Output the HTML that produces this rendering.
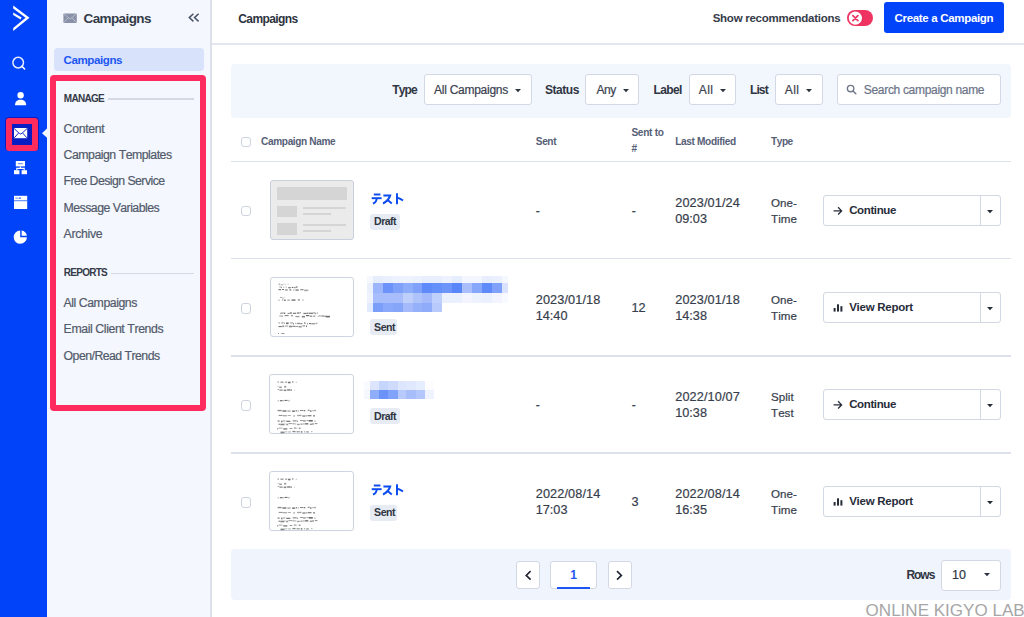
<!DOCTYPE html><html><head><meta charset="utf-8"><style>
html,body{margin:0;padding:0;width:1024px;height:617px;overflow:hidden;background:#fff;font-family:"Liberation Sans",sans-serif;}
.t{position:absolute;white-space:nowrap;font-kerning:none;}
.n{-webkit-text-stroke:0.2px currentColor;}
.r{position:absolute;box-sizing:border-box;}
svg{position:absolute;}
</style></head><body>
<div class="r" style="left:0px;top:0px;width:47px;height:617px;background:#0043F9;"></div>
<svg style="left:0px;top:0px" width="47" height="40" viewBox="0 0 47 40"><path d="M13.2 5.4 L29.5 17.8 L13.2 30.9 L13.2 27.9 L25.6 17.8 L13.2 8.6 Z" fill="#fff"/><path d="M13.2 12.6 L21.6 17.5 L20.5 19.5 L13.2 15.1 Z" fill="#fff"/></svg>
<svg style="left:0px;top:48px" width="47" height="30" viewBox="0 48 47 30"><circle cx="18.2" cy="62.6" r="5.3" fill="none" stroke="#fff" stroke-width="1.5" opacity="0.9"/><path d="M21.9 66.3 L24.6 69" stroke="#fff" stroke-width="1.6" stroke-linecap="round"/></svg>
<svg style="left:0px;top:88px" width="47" height="22" viewBox="0 88 47 22"><circle cx="20.6" cy="95.2" r="3.2" fill="#fff"/><path d="M15 105.2 C15 101.6 17.5 99.8 20.6 99.8 C23.7 99.8 26.2 101.6 26.2 105.2 Z" fill="#fff"/></svg>
<div class="r" style="left:4.6px;top:117.2px;width:34px;height:34px;background:#0A1DC2;border-radius:4px;"></div>
<div class="r" style="left:5.5px;top:118px;width:32.5px;height:32.5px;background:transparent;border:6px solid #FF2A5E;border-radius:3px;"></div>
<svg style="left:0px;top:112px" width="47" height="40" viewBox="0 112 47 40"><rect x="14" y="128" width="13.2" height="10.2" fill="#fff"/><path d="M14.2 128.6 L19.2 133.3 Q20.6 134.6 22 133.3 L27 128.6 M14.3 137.8 L18.4 133.2 M26.9 137.8 L22.8 133.2" fill="none" stroke="#0A1DC2" stroke-width="0.95"/></svg>
<svg style="left:40px;top:126px" width="8" height="14" viewBox="40 126 8 14"><path d="M42 133.2 L47 128.6 L47 137.8 Z" fill="#F4F7FD"/></svg>
<svg style="left:0px;top:156px" width="47" height="22" viewBox="0 156 47 22"><rect x="15.8" y="161" width="9.2" height="5.4" fill="#fff"/><rect x="18" y="163" width="4.8" height="1.2" fill="#0043F9" opacity="0.55"/><path d="M20.4 166.4 V168.3 M16.8 170.2 V168.3 H24.2 V170.2" fill="none" stroke="#fff" stroke-width="1.15"/><rect x="14" y="170.2" width="5.4" height="4" fill="#fff"/><rect x="21.6" y="170.2" width="5.4" height="4" fill="#fff"/></svg>
<svg style="left:0px;top:192px" width="47" height="20" viewBox="0 192 47 20"><rect x="14" y="195.8" width="13.2" height="13.2" fill="#fff"/><rect x="14" y="200.2" width="13.2" height="1" fill="#0043F9" opacity="0.7"/><rect x="15.6" y="197.6" width="1" height="1" fill="#0043F9"/><rect x="17.4" y="197.6" width="1" height="1" fill="#0043F9"/><rect x="19" y="197.6" width="2" height="1" fill="#0043F9"/></svg>
<svg style="left:0px;top:228px" width="47" height="18" viewBox="0 228 47 18"><path d="M20.2 230.6 A6.6 6.6 0 1 0 26.9 237.2 L20.2 237.2 Z" fill="#fff"/><path d="M21.6 230.6 A6.6 6.6 0 0 1 26.9 235.8 L21.6 235.8 Z" fill="#fff"/></svg>
<div class="r" style="left:47px;top:0px;width:164px;height:617px;background:#F4F7FD;"></div>
<div class="r" style="left:210px;top:0px;width:2px;height:617px;background:#DCE0EA;"></div>
<svg style="left:60px;top:10px" width="20" height="16" viewBox="60 10 20 16"><rect x="63.4" y="13.4" width="13.4" height="9.6" fill="#8991A8" rx="0.8"/><path d="M63.8 13.9 L70.1 19 L76.4 13.9 M63.8 22.6 L68.2 17.8 M76.4 22.6 L72 17.8" fill="none" stroke="#C9CDD6" stroke-width="0.7"/></svg>
<div class="t" style="left:83.5px;top:11.55px;font-size:13.5px;line-height:13.5px;font-weight:700;color:#333A48;letter-spacing:-0.603px;">Campaigns</div>
<svg style="left:184px;top:9px" width="20" height="16" viewBox="184 9 20 16"><path d="M193.4 13.8 L189.3 17.6 L193.4 21.4 M198.6 13.8 L194.5 17.6 L198.6 21.4" fill="none" stroke="#4A5468" stroke-width="1.5"/></svg>
<div class="r" style="left:53.6px;top:47.8px;width:150.6px;height:22.8px;background:#D8E3FB;border-radius:4px;"></div>
<div class="t" style="left:63.5px;top:53.80px;font-size:11.6px;line-height:11.6px;font-weight:700;color:#1D56F2;letter-spacing:-0.439px;">Campaigns</div>
<div class="r" style="left:50px;top:75px;width:156px;height:336px;background:transparent;border:6px solid #FF2A5E;border-radius:4px;"></div>
<div class="t" style="left:63.8px;top:93.90px;font-size:10px;line-height:10px;font-weight:700;color:#353B48;letter-spacing:-0.709px;">MANAGE</div>
<div class="r" style="left:108px;top:98.4px;width:86px;height:1.2px;background:#D3D8E3;"></div>
<div class="t n" style="left:63.6px;top:122.85px;font-size:12.3px;line-height:12.3px;font-weight:400;color:#525A6B;letter-spacing:-0.337px;">Content</div>
<div class="t n" style="left:63.6px;top:149.05px;font-size:12.3px;line-height:12.3px;font-weight:400;color:#525A6B;letter-spacing:-0.491px;">Campaign Templates</div>
<div class="t n" style="left:63.6px;top:175.35px;font-size:12.3px;line-height:12.3px;font-weight:400;color:#525A6B;letter-spacing:-0.548px;">Free Design Service</div>
<div class="t n" style="left:63.6px;top:201.55px;font-size:12.3px;line-height:12.3px;font-weight:400;color:#525A6B;letter-spacing:-0.534px;">Message Variables</div>
<div class="t n" style="left:63.6px;top:227.85px;font-size:12.3px;line-height:12.3px;font-weight:400;color:#525A6B;letter-spacing:-0.326px;">Archive</div>
<div class="t" style="left:63.8px;top:267.90px;font-size:10px;line-height:10px;font-weight:700;color:#353B48;letter-spacing:-0.74px;">REPORTS</div>
<div class="r" style="left:111px;top:273px;width:83px;height:1.2px;background:#D3D8E3;"></div>
<div class="t n" style="left:63.6px;top:297.05px;font-size:12.3px;line-height:12.3px;font-weight:400;color:#525A6B;letter-spacing:-0.462px;">All Campaigns</div>
<div class="t n" style="left:63.6px;top:323.25px;font-size:12.3px;line-height:12.3px;font-weight:400;color:#525A6B;letter-spacing:-0.403px;">Email Client Trends</div>
<div class="t n" style="left:63.6px;top:349.55px;font-size:12.3px;line-height:12.3px;font-weight:400;color:#525A6B;letter-spacing:-0.537px;">Open/Read Trends</div>
<div class="r" style="left:212px;top:43px;width:812px;height:1.6px;background:#E3E6EE;"></div>
<div class="t" style="left:238.3px;top:12.80px;font-size:12px;line-height:12px;font-weight:700;color:#2D3340;letter-spacing:-0.605px;">Campaigns</div>
<div class="t" style="left:712.7px;top:12.85px;font-size:11.5px;line-height:11.5px;font-weight:700;color:#363C49;letter-spacing:-0.258px;">Show recommendations</div>
<div class="r" style="left:846.9px;top:9.8px;width:26.5px;height:16.4px;background:#EF3462;border-radius:8.2px;"></div>
<svg style="left:846px;top:9px" width="20" height="18" viewBox="846 9 20 18"><circle cx="856.6" cy="18.1" r="6.8" fill="#D82F5A" opacity="0.5"/><circle cx="855.4" cy="18.1" r="6.6" fill="#fff"/><path d="M852.9 15.6 L857.9 20.6 M857.9 15.6 L852.9 20.6" stroke="#EE3563" stroke-width="1.7" stroke-linecap="round"/></svg>
<div class="r" style="left:883.5px;top:2.4px;width:120.8px;height:31px;background:#0043F9;border-radius:3px;"></div>
<div class="t" style="left:894.5px;top:12.65px;font-size:11.5px;line-height:11.5px;font-weight:700;color:#fff;letter-spacing:-0.317px;">Create a Campaign</div>
<div class="r" style="left:231px;top:64px;width:780px;height:54px;background:#F2F6FD;border-radius:4px;"></div>
<div class="t" style="left:392.2px;top:83.80px;font-size:12px;line-height:12px;font-weight:700;color:#2F3542;letter-spacing:-0.856px;">Type</div>
<div class="r" style="left:424.4px;top:74.2px;width:107.2px;height:30.6px;background:;border:1px solid #D3D8E4;border-radius:3px;background:#fff;"></div>
<div class="t n" style="left:434px;top:84.40px;font-size:12px;line-height:12px;font-weight:400;color:#3A4150;letter-spacing:-0.261px;">All Campaigns</div>
<svg style="left:513.6px;top:87.6px" width="9" height="6" viewBox="513.6 87.6 9 6"><path d="M514.6 88.6 L520.6 88.6 L517.6 91.8 Z" fill="#2D3340"/></svg>
<div class="t" style="left:545px;top:83.80px;font-size:12px;line-height:12px;font-weight:700;color:#2F3542;letter-spacing:-0.467px;">Status</div>
<div class="r" style="left:585.4px;top:74.2px;width:54px;height:30.6px;background:;border:1px solid #D3D8E4;border-radius:3px;background:#fff;"></div>
<div class="t n" style="left:596.5px;top:84.40px;font-size:12px;line-height:12px;font-weight:400;color:#3A4150;letter-spacing:-0.419px;">Any</div>
<svg style="left:621.6px;top:87.6px" width="9" height="6" viewBox="621.6 87.6 9 6"><path d="M622.6 88.6 L628.6 88.6 L625.6 91.8 Z" fill="#2D3340"/></svg>
<div class="t" style="left:653.6px;top:83.80px;font-size:12px;line-height:12px;font-weight:700;color:#2F3542;letter-spacing:-0.65px;">Label</div>
<div class="r" style="left:688.6px;top:74.2px;width:47.8px;height:30.6px;background:;border:1px solid #D3D8E4;border-radius:3px;background:#fff;"></div>
<div class="t n" style="left:698.8px;top:84.40px;font-size:12px;line-height:12px;font-weight:400;color:#3A4150;letter-spacing:0.352px;">All</div>
<svg style="left:719.2px;top:87.6px" width="9" height="6" viewBox="719.2 87.6 9 6"><path d="M720.2 88.6 L726.2 88.6 L723.2 91.8 Z" fill="#2D3340"/></svg>
<div class="t" style="left:750px;top:83.80px;font-size:12px;line-height:12px;font-weight:700;color:#2F3542;letter-spacing:-0.898px;">List</div>
<div class="r" style="left:774.7px;top:74.2px;width:48px;height:30.6px;background:;border:1px solid #D3D8E4;border-radius:3px;background:#fff;"></div>
<div class="t n" style="left:784.8px;top:84.40px;font-size:12px;line-height:12px;font-weight:400;color:#3A4150;letter-spacing:0.352px;">All</div>
<svg style="left:805.4px;top:87.6px" width="9" height="6" viewBox="805.4 87.6 9 6"><path d="M806.4 88.6 L812.4 88.6 L809.4 91.8 Z" fill="#2D3340"/></svg>
<div class="r" style="left:836.5px;top:74.2px;width:164.5px;height:30.6px;background:;border:1px solid #D3D8E4;border-radius:3px;background:#fff;"></div>
<svg style="left:844px;top:82px" width="16" height="16" viewBox="844 82 16 16"><circle cx="850.6" cy="88.6" r="3.2" fill="none" stroke="#6F788B" stroke-width="1.4"/><path d="M853 91 L855.8 93.8" stroke="#6F788B" stroke-width="1.5" stroke-linecap="round"/></svg>
<div class="t n" style="left:863.8px;top:84.20px;font-size:12px;line-height:12px;font-weight:400;color:#6B7488;letter-spacing:-0.316px;">Search campaign name</div>
<div class="r" style="left:241.2px;top:136.6px;width:10.2px;height:10.4px;background:#fff;border:1px solid #CDD3DF;border-radius:3px;"></div>
<div class="t" style="left:261.1px;top:136.75px;font-size:10.1px;line-height:10.1px;font-weight:700;color:#566077;letter-spacing:-0.378px;">Campaign Name</div>
<div class="t" style="left:535.8px;top:136.65px;font-size:10.1px;line-height:10.1px;font-weight:700;color:#566077;letter-spacing:-0.393px;">Sent</div>
<div class="t" style="left:631.4px;top:128.05px;font-size:10.1px;line-height:10.1px;font-weight:700;color:#566077;letter-spacing:-0.27px;">Sent to</div>
<div class="t" style="left:631.4px;top:144.05px;font-size:10.1px;line-height:10.1px;font-weight:700;color:#566077;">#</div>
<div class="t" style="left:675.3px;top:136.65px;font-size:10.1px;line-height:10.1px;font-weight:700;color:#566077;letter-spacing:-0.357px;">Last Modified</div>
<div class="t" style="left:771.1px;top:136.65px;font-size:10.1px;line-height:10.1px;font-weight:700;color:#566077;letter-spacing:-0.489px;">Type</div>
<div class="r" style="left:231px;top:161px;width:780px;height:1.4px;background:#DCE0EA;"></div>
<div class="r" style="left:241.2px;top:205.9px;width:10.2px;height:10.4px;background:#fff;border:1px solid #CDD3DF;border-radius:3px;"></div>
<div class="r" style="left:269.5px;top:180.2px;width:84.2px;height:60px;background:#EBEBEB;border:1px solid #C9CFDC;border-radius:3px;"></div>
<div class="r" style="left:276.7px;top:186.89999999999998px;width:70px;height:13.6px;background:#D5D5D5;"></div>
<div class="r" style="left:276.7px;top:206.39999999999998px;width:20.7px;height:10.7px;background:#D5D5D5;"></div>
<div class="r" style="left:302.9px;top:207.0px;width:43px;height:2px;background:#D5D5D5;"></div>
<div class="r" style="left:302.9px;top:212.6px;width:28px;height:2px;background:#D5D5D5;"></div>
<div class="r" style="left:276.7px;top:223.0px;width:20.7px;height:11.7px;background:#D5D5D5;"></div>
<div class="r" style="left:302.9px;top:223.6px;width:43px;height:2px;background:#D5D5D5;"></div>
<div class="r" style="left:302.9px;top:229.6px;width:28px;height:2px;background:#D5D5D5;"></div>
<svg style="left:370.6px;top:193px" width="34" height="13" viewBox="370.6 193 34 13"><g fill="none" stroke="#0B4BEF" stroke-width="1.95" stroke-linecap="butt">
<path d="M373.4 194.5 H380"/><path d="M371.3 198.2 H381.2"/><path d="M376.3 198.2 C376.3 201 375 202.6 372.6 203.5"/>
<path d="M383 195.4 H389.8 C388.8 198.8 386.6 201.6 382.6 203.5"/><path d="M386.6 199.6 L391.4 203.6"/>
<path d="M396.6 193.3 V204.2"/><path d="M397 197.6 C398.8 198.2 400.8 199.2 402.6 200.6"/>
</g></svg>
<div class="r" style="left:370.3px;top:214.2px;width:29.8px;height:15.8px;background:#E6EBF4;border-radius:3px;"></div>
<div class="t" style="left:374.1px;top:216.40px;font-size:10.6px;line-height:10.6px;font-weight:700;color:#2F3542;letter-spacing:-0.598px;">Draft</div>
<div class="t n" style="left:535.8px;top:204.60px;font-size:12px;line-height:12px;font-weight:400;color:#363D4B;">-</div>
<div class="t n" style="left:631.8px;top:204.60px;font-size:12px;line-height:12px;font-weight:400;color:#363D4B;">-</div>
<div class="t n" style="left:675.3px;top:196.85px;font-size:12.7px;line-height:12.7px;font-weight:400;color:#363D4B;letter-spacing:0.103px;">2023/01/24</div>
<div class="t n" style="left:675.3px;top:212.85px;font-size:12.7px;line-height:12.7px;font-weight:400;color:#363D4B;letter-spacing:-0.02px;">09:03</div>
<div class="t n" style="left:771.1px;top:196.60px;font-size:11.6px;line-height:11.6px;font-weight:400;color:#363D4B;">One-</div>
<div class="t n" style="left:771.1px;top:212.70px;font-size:11.6px;line-height:11.6px;font-weight:400;color:#363D4B;">Time</div>
<div class="r" style="left:823.2px;top:195.2px;width:177.6px;height:30.6px;background:#fff;border:1px solid #D3D8E4;border-radius:3px;"></div>
<div class="r" style="left:979.6px;top:196.2px;width:1.2px;height:28.6px;background:#D3D8E4;"></div>
<svg style="left:985.9px;top:208.6px" width="9" height="6" viewBox="985.9 208.6 9 6"><path d="M986.9 209.6 L992.9 209.6 L989.9 212.79999999999998 Z" fill="#262C38"/></svg>
<svg style="left:830px;top:203.2px" width="16" height="14" viewBox="0 0 16 14"><path d="M3.6 7.9 H11.6 M8.1 4.3 L11.6 7.9 L8.1 11.5" fill="none" stroke="#262C38" stroke-width="1.3"/></svg>
<div class="t" style="left:849.2px;top:204.95px;font-size:11.5px;line-height:11.5px;font-weight:700;color:#272D3A;letter-spacing:-0.388px;">Continue</div>
<div class="r" style="left:231px;top:258px;width:780px;height:1.4px;background:#DCE0EA;"></div>
<div class="r" style="left:241.2px;top:303.2px;width:10.2px;height:10.4px;background:#fff;border:1px solid #CDD3DF;border-radius:3px;"></div>
<div class="r" style="left:269.6px;top:277.3px;width:84.2px;height:60px;background:#fff;border:1px solid #CDD3E0;border-radius:3px;"></div>
<svg style="left:269.6px;top:277.3px" width="84" height="60" viewBox="0 0 84 60"><g fill="#2a2a2a"><rect x="8.5" y="6.5" width="1.6" height="1.6" opacity="0.32"/><rect x="10.6" y="7.1" width="2.6" height="1.3" opacity="0.31"/><rect x="13.5" y="6.5" width="1.2" height="0.9" opacity="0.29"/><rect x="15.0" y="6.9" width="0.8" height="1.6" opacity="0.23"/><rect x="17.4" y="6.7" width="1.2" height="0.9" opacity="0.31"/><rect x="9.5" y="9.4" width="1.2" height="1.1" opacity="0.54"/><rect x="11.0" y="9.8" width="0.8" height="1.3" opacity="0.62"/><rect x="13.4" y="9.7" width="0.8" height="1.1" opacity="0.56"/><rect x="15.8" y="9.7" width="0.8" height="0.9" opacity="0.64"/><rect x="18.2" y="10.0" width="2.6" height="1.3" opacity="0.59"/><rect x="21.8" y="9.9" width="1.6" height="1.1" opacity="0.69"/><rect x="24.2" y="10.0" width="1.2" height="1.3" opacity="0.61"/><rect x="25.7" y="9.4" width="1.8" height="1.3" opacity="0.63"/><rect x="8.5" y="12.1" width="2.6" height="1.1" opacity="0.68"/><rect x="12.1" y="12.1" width="2.0" height="0.9" opacity="0.74"/><rect x="15.1" y="12.3" width="2.6" height="1.3" opacity="0.55"/><rect x="19.3" y="12.1" width="2.0" height="1.6" opacity="0.47"/><rect x="22.9" y="12.6" width="1.6" height="0.9" opacity="0.47"/><rect x="25.5" y="12.3" width="3.2" height="1.6" opacity="0.54"/><rect x="30.3" y="12.3" width="3.2" height="0.9" opacity="0.73"/><rect x="34.3" y="12.6" width="2.6" height="1.6" opacity="0.47"/><rect x="37.2" y="12.7" width="1.2" height="1.1" opacity="0.57"/><rect x="10.0" y="19.9" width="2.0" height="1.1" opacity="0.35"/><rect x="12.3" y="20.3" width="1.2" height="1.3" opacity="0.40"/><rect x="14.5" y="19.6" width="0.5" height="1.1" opacity="0.30"/><rect x="8.5" y="22.7" width="1.2" height="1.1" opacity="0.45"/><rect x="12.1" y="22.3" width="1.2" height="1.3" opacity="0.45"/><rect x="14.1" y="22.6" width="1.6" height="1.3" opacity="0.74"/><rect x="17.3" y="22.7" width="2.6" height="0.9" opacity="0.59"/><rect x="21.5" y="22.3" width="4.0" height="1.6" opacity="0.57"/><rect x="27.9" y="22.1" width="2.0" height="1.6" opacity="0.47"/><rect x="32.3" y="22.5" width="1.2" height="1.1" opacity="0.48"/><rect x="10.0" y="35.9" width="0.8" height="1.1" opacity="0.61"/><rect x="11.1" y="35.6" width="2.6" height="0.9" opacity="0.71"/><rect x="14.0" y="35.6" width="1.2" height="1.3" opacity="0.74"/><rect x="17.6" y="35.9" width="2.0" height="0.9" opacity="0.70"/><rect x="19.9" y="35.2" width="2.0" height="1.6" opacity="0.54"/><rect x="22.9" y="35.7" width="3.2" height="1.3" opacity="0.59"/><rect x="26.9" y="35.5" width="2.6" height="1.1" opacity="0.74"/><rect x="29.8" y="35.3" width="1.2" height="0.9" opacity="0.68"/><rect x="33.4" y="35.8" width="3.2" height="1.3" opacity="0.61"/><rect x="36.9" y="35.6" width="1.6" height="1.3" opacity="0.64"/><rect x="39.0" y="35.7" width="4.0" height="1.1" opacity="0.70"/><rect x="43.5" y="35.1" width="1.2" height="1.6" opacity="0.56"/><rect x="45.2" y="35.7" width="0.8" height="1.6" opacity="0.53"/><rect x="46.8" y="35.4" width="0.7" height="1.3" opacity="0.74"/><rect x="9.5" y="38.4" width="1.2" height="1.1" opacity="0.59"/><rect x="11.0" y="38.6" width="2.0" height="0.9" opacity="0.59"/><rect x="14.6" y="38.2" width="4.0" height="0.9" opacity="0.70"/><rect x="21.0" y="38.2" width="2.0" height="1.1" opacity="0.59"/><rect x="25.4" y="38.9" width="4.0" height="1.3" opacity="0.48"/><rect x="31.8" y="38.9" width="3.2" height="1.6" opacity="0.57"/><rect x="36.0" y="38.1" width="3.2" height="1.1" opacity="0.75"/><rect x="39.7" y="38.6" width="2.6" height="1.1" opacity="0.63"/><rect x="43.3" y="38.5" width="2.0" height="1.3" opacity="0.50"/><rect x="47.7" y="38.8" width="0.8" height="0.9" opacity="0.61"/><rect x="48.8" y="38.3" width="2.0" height="1.1" opacity="0.46"/><rect x="51.3" y="38.4" width="2.6" height="1.3" opacity="0.53"/><rect x="54.4" y="38.6" width="1.2" height="1.3" opacity="0.72"/><rect x="55.9" y="38.8" width="4.0" height="1.6" opacity="0.70"/><rect x="8.5" y="45.4" width="1.2" height="1.1" opacity="0.61"/><rect x="11.3" y="45.5" width="2.0" height="0.9" opacity="0.68"/><rect x="13.8" y="45.7" width="1.2" height="0.9" opacity="0.62"/><rect x="16.0" y="45.5" width="2.6" height="1.6" opacity="0.69"/><rect x="20.2" y="45.4" width="2.6" height="1.1" opacity="0.51"/><rect x="23.1" y="46.0" width="0.8" height="1.6" opacity="0.62"/><rect x="25.5" y="45.8" width="0.8" height="1.3" opacity="0.63"/><rect x="27.3" y="45.8" width="2.6" height="1.3" opacity="0.59"/><rect x="30.4" y="46.1" width="2.0" height="1.1" opacity="0.66"/><rect x="34.0" y="45.5" width="1.6" height="1.1" opacity="0.70"/><rect x="37.2" y="45.9" width="0.8" height="1.6" opacity="0.54"/><rect x="39.0" y="46.0" width="2.0" height="1.1" opacity="0.65"/><rect x="41.3" y="46.1" width="4.0" height="1.3" opacity="0.49"/><rect x="45.8" y="45.8" width="1.7" height="0.9" opacity="0.57"/><rect x="8.5" y="49.0" width="3.2" height="1.1" opacity="0.66"/><rect x="12.2" y="48.5" width="2.0" height="1.6" opacity="0.51"/><rect x="15.0" y="48.6" width="3.2" height="0.9" opacity="0.55"/><rect x="19.0" y="48.7" width="3.2" height="1.6" opacity="0.55"/><rect x="22.5" y="48.8" width="2.6" height="0.9" opacity="0.75"/><rect x="25.4" y="48.9" width="0.8" height="1.3" opacity="0.53"/><rect x="26.5" y="48.9" width="1.2" height="1.1" opacity="0.70"/><rect x="28.5" y="48.9" width="3.2" height="1.6" opacity="0.49"/><rect x="32.5" y="48.2" width="2.6" height="1.3" opacity="0.48"/><rect x="36.1" y="48.4" width="0.9" height="1.6" opacity="0.72"/><rect x="8.0" y="56.0" width="0.8" height="0.9" opacity="0.69"/><rect x="11.2" y="56.0" width="3.3" height="0.9" opacity="0.53"/></g></svg>
<div class="r" style="left:367.1px;top:276.4px;width:5.999999999999977px;height:6.700000000000022px;background:#F5F8FF;"></div>
<div class="r" style="left:373px;top:276.4px;width:9.999999999999977px;height:6.700000000000022px;background:#E6EDFD;"></div>
<div class="r" style="left:382.9px;top:276.4px;width:10.000000000000034px;height:6.700000000000022px;background:#EAF0FE;"></div>
<div class="r" style="left:392.8px;top:276.4px;width:9.900000000000011px;height:6.700000000000022px;background:#EDF2FE;"></div>
<div class="r" style="left:402.6px;top:276.4px;width:9.999999999999977px;height:6.700000000000022px;background:#EFF3FE;"></div>
<div class="r" style="left:412.5px;top:276.4px;width:9.999999999999977px;height:6.700000000000022px;background:#ECF1FE;"></div>
<div class="r" style="left:422.4px;top:276.4px;width:10.000000000000034px;height:6.700000000000022px;background:#E8EEFD;"></div>
<div class="r" style="left:432.3px;top:276.4px;width:9.999999999999977px;height:6.700000000000022px;background:#E8EEFD;"></div>
<div class="r" style="left:442.2px;top:276.4px;width:9.900000000000011px;height:6.700000000000022px;background:#EDF2FE;"></div>
<div class="r" style="left:452px;top:276.4px;width:9.999999999999977px;height:6.700000000000022px;background:#E6EDFD;"></div>
<div class="r" style="left:461.9px;top:276.4px;width:10.000000000000034px;height:6.700000000000022px;background:#F3F6FF;"></div>
<div class="r" style="left:471.8px;top:276.4px;width:9.999999999999977px;height:6.700000000000022px;background:#F3F6FF;"></div>
<div class="r" style="left:481.7px;top:276.4px;width:10.000000000000034px;height:6.700000000000022px;background:#E8EEFD;"></div>
<div class="r" style="left:491.6px;top:276.4px;width:9.999999999999977px;height:6.700000000000022px;background:#EBF0FE;"></div>
<div class="r" style="left:501.5px;top:276.4px;width:6.799999999999988px;height:6.700000000000022px;background:#F6F8FF;"></div>
<div class="r" style="left:367.1px;top:283px;width:5.999999999999977px;height:10.1px;background:#EAF0FE;"></div>
<div class="r" style="left:373px;top:283px;width:9.999999999999977px;height:10.1px;background:#9DB5FB;"></div>
<div class="r" style="left:382.9px;top:283px;width:10.000000000000034px;height:10.1px;background:#6B93F9;"></div>
<div class="r" style="left:392.8px;top:283px;width:9.900000000000011px;height:10.1px;background:#7FA1FA;"></div>
<div class="r" style="left:402.6px;top:283px;width:9.999999999999977px;height:10.1px;background:#8DACFA;"></div>
<div class="r" style="left:412.5px;top:283px;width:9.999999999999977px;height:10.1px;background:#7FA1FA;"></div>
<div class="r" style="left:422.4px;top:283px;width:10.000000000000034px;height:10.1px;background:#5F8AF9;"></div>
<div class="r" style="left:432.3px;top:283px;width:9.999999999999977px;height:10.1px;background:#6590F9;"></div>
<div class="r" style="left:442.2px;top:283px;width:9.900000000000011px;height:10.1px;background:#6D94F9;"></div>
<div class="r" style="left:452px;top:283px;width:9.999999999999977px;height:10.1px;background:#5986F9;"></div>
<div class="r" style="left:461.9px;top:283px;width:10.000000000000034px;height:10.1px;background:#A9BEFB;"></div>
<div class="r" style="left:471.8px;top:283px;width:9.999999999999977px;height:10.1px;background:#87A7FA;"></div>
<div class="r" style="left:481.7px;top:283px;width:10.000000000000034px;height:10.1px;background:#5F8AF9;"></div>
<div class="r" style="left:491.6px;top:283px;width:9.999999999999977px;height:10.1px;background:#7FA1FA;"></div>
<div class="r" style="left:501.5px;top:283px;width:6.799999999999988px;height:10.1px;background:#D9E3FD;"></div>
<div class="r" style="left:367.1px;top:293px;width:5.999999999999977px;height:9.900000000000011px;background:#EDF2FE;"></div>
<div class="r" style="left:373px;top:293px;width:9.999999999999977px;height:9.900000000000011px;background:#A8BDFB;"></div>
<div class="r" style="left:382.9px;top:293px;width:10.000000000000034px;height:9.900000000000011px;background:#A8BDFB;"></div>
<div class="r" style="left:392.8px;top:293px;width:9.900000000000011px;height:9.900000000000011px;background:#A8BDFB;"></div>
<div class="r" style="left:402.6px;top:293px;width:9.999999999999977px;height:9.900000000000011px;background:#BFCFFC;"></div>
<div class="r" style="left:412.5px;top:293px;width:9.999999999999977px;height:9.900000000000011px;background:#AFC3FB;"></div>
<div class="r" style="left:422.4px;top:293px;width:10.000000000000034px;height:9.900000000000011px;background:#A4BAFB;"></div>
<div class="r" style="left:432.3px;top:293px;width:9.999999999999977px;height:9.900000000000011px;background:#C0D0FC;"></div>
<div class="r" style="left:442.2px;top:293px;width:9.900000000000011px;height:9.900000000000011px;background:#EAF0FE;"></div>
<div class="r" style="left:452px;top:293px;width:9.999999999999977px;height:9.900000000000011px;background:#EAF0FE;"></div>
<div class="r" style="left:461.9px;top:293px;width:10.000000000000034px;height:9.900000000000011px;background:#F2F5FF;"></div>
<div class="r" style="left:471.8px;top:293px;width:9.999999999999977px;height:9.900000000000011px;background:#EEF2FE;"></div>
<div class="r" style="left:481.7px;top:293px;width:10.000000000000034px;height:9.900000000000011px;background:#EAF0FE;"></div>
<div class="r" style="left:491.6px;top:293px;width:9.999999999999977px;height:9.900000000000011px;background:#F2F5FF;"></div>
<div class="r" style="left:501.5px;top:293px;width:6.799999999999988px;height:9.900000000000011px;background:#F8FAFF;"></div>
<div class="r" style="left:367.1px;top:302.8px;width:5.999999999999977px;height:8.799999999999988px;background:#E2EAFD;"></div>
<div class="r" style="left:373px;top:302.8px;width:9.999999999999977px;height:8.799999999999988px;background:#7A9EFA;"></div>
<div class="r" style="left:382.9px;top:302.8px;width:10.000000000000034px;height:8.799999999999988px;background:#8AA9FA;"></div>
<div class="r" style="left:392.8px;top:302.8px;width:9.900000000000011px;height:8.799999999999988px;background:#86A6FA;"></div>
<div class="r" style="left:402.6px;top:302.8px;width:9.999999999999977px;height:8.799999999999988px;background:#A4BAFB;"></div>
<div class="r" style="left:412.5px;top:302.8px;width:9.999999999999977px;height:8.799999999999988px;background:#95B1FA;"></div>
<div class="r" style="left:422.4px;top:302.8px;width:10.000000000000034px;height:8.799999999999988px;background:#8EACFA;"></div>
<div class="r" style="left:432.3px;top:302.8px;width:9.999999999999977px;height:8.799999999999988px;background:#B8C9FC;"></div>
<div class="r" style="left:370.3px;top:319.3px;width:27.2px;height:15.8px;background:#E6EBF4;border-radius:3px;"></div>
<div class="t" style="left:374.1px;top:321.50px;font-size:10.6px;line-height:10.6px;font-weight:700;color:#2F3542;letter-spacing:-0.476px;">Sent</div>
<div class="t n" style="left:535.8px;top:294.15px;font-size:12.7px;line-height:12.7px;font-weight:400;color:#363D4B;letter-spacing:0.103px;">2023/01/18</div>
<div class="t n" style="left:535.8px;top:310.15px;font-size:12.7px;line-height:12.7px;font-weight:400;color:#363D4B;letter-spacing:-0.02px;">14:40</div>
<div class="t n" style="left:631.4px;top:301.55px;font-size:12.7px;line-height:12.7px;font-weight:400;color:#363D4B;">12</div>
<div class="t n" style="left:675.3px;top:294.15px;font-size:12.7px;line-height:12.7px;font-weight:400;color:#363D4B;letter-spacing:0.103px;">2023/01/18</div>
<div class="t n" style="left:675.3px;top:310.15px;font-size:12.7px;line-height:12.7px;font-weight:400;color:#363D4B;letter-spacing:-0.02px;">14:38</div>
<div class="t n" style="left:771.1px;top:293.90px;font-size:11.6px;line-height:11.6px;font-weight:400;color:#363D4B;">One-</div>
<div class="t n" style="left:771.1px;top:310.00px;font-size:11.6px;line-height:11.6px;font-weight:400;color:#363D4B;">Time</div>
<div class="r" style="left:823.2px;top:292.3px;width:177.6px;height:30.6px;background:#fff;border:1px solid #D3D8E4;border-radius:3px;"></div>
<div class="r" style="left:979.6px;top:293.3px;width:1.2px;height:28.6px;background:#D3D8E4;"></div>
<svg style="left:985.9px;top:305.7px" width="9" height="6" viewBox="985.9 305.7 9 6"><path d="M986.9 306.7 L992.9 306.7 L989.9 309.9 Z" fill="#262C38"/></svg>
<svg style="left:830px;top:300.3px" width="16" height="14" viewBox="0 0 16 14"><rect x="3.6" y="8" width="2" height="3.6" fill="#262C38"/><rect x="7" y="4.3" width="2" height="7.3" fill="#262C38"/><rect x="10.4" y="6.2" width="2" height="5.4" fill="#262C38"/></svg>
<div class="t" style="left:849.2px;top:302.05px;font-size:11.5px;line-height:11.5px;font-weight:700;color:#272D3A;letter-spacing:-0.255px;">View Report</div>
<div class="r" style="left:231px;top:355.3px;width:780px;height:1.4px;background:#DCE0EA;"></div>
<div class="r" style="left:241.2px;top:400.2px;width:10.2px;height:10.4px;background:#fff;border:1px solid #CDD3DF;border-radius:3px;"></div>
<div class="r" style="left:269.4px;top:374.1px;width:84.2px;height:60px;background:#fff;border:1px solid #CDD3E0;border-radius:3px;"></div>
<svg style="left:269.4px;top:374.1px" width="84" height="60" viewBox="0 0 84 60"><g fill="#2a2a2a"><rect x="8.6" y="7.5" width="1.2" height="1.1" opacity="0.62"/><rect x="11.4" y="7.7" width="3.2" height="0.9" opacity="0.69"/><rect x="16.2" y="7.6" width="2.0" height="1.1" opacity="0.56"/><rect x="19.0" y="7.7" width="2.6" height="1.6" opacity="0.63"/><rect x="23.2" y="7.4" width="1.2" height="1.1" opacity="0.78"/><rect x="26.8" y="7.8" width="0.8" height="0.9" opacity="0.55"/><rect x="8.6" y="12.0" width="0.8" height="0.9" opacity="0.49"/><rect x="10.2" y="12.5" width="2.6" height="1.6" opacity="0.46"/><rect x="15.2" y="11.9" width="2.0" height="1.6" opacity="0.52"/><rect x="8.6" y="15.0" width="1.6" height="0.9" opacity="0.44"/><rect x="10.5" y="15.5" width="3.2" height="1.3" opacity="0.52"/><rect x="14.7" y="15.5" width="2.6" height="1.6" opacity="0.56"/><rect x="18.1" y="15.3" width="3.2" height="1.3" opacity="0.67"/><rect x="21.6" y="15.5" width="1.2" height="1.3" opacity="0.67"/><rect x="25.2" y="15.6" width="0.4" height="1.1" opacity="0.58"/><rect x="8.6" y="26.4" width="1.6" height="0.9" opacity="0.42"/><rect x="11.0" y="26.0" width="2.0" height="1.3" opacity="0.62"/><rect x="13.3" y="26.0" width="1.2" height="1.3" opacity="0.52"/><rect x="14.8" y="26.2" width="0.8" height="0.9" opacity="0.51"/><rect x="15.9" y="25.9" width="2.6" height="1.1" opacity="0.67"/><rect x="19.3" y="26.5" width="0.8" height="0.9" opacity="0.66"/><rect x="20.4" y="25.7" width="0.5" height="1.3" opacity="0.45"/><rect x="8.6" y="35.9" width="4.0" height="1.3" opacity="0.56"/><rect x="13.4" y="36.2" width="4.0" height="1.6" opacity="0.59"/><rect x="18.4" y="36.6" width="3.2" height="0.9" opacity="0.64"/><rect x="23.2" y="36.4" width="2.6" height="1.6" opacity="0.64"/><rect x="26.6" y="36.2" width="1.6" height="1.3" opacity="0.61"/><rect x="29.2" y="36.3" width="0.8" height="1.3" opacity="0.46"/><rect x="31.0" y="36.1" width="3.2" height="0.9" opacity="0.64"/><rect x="34.7" y="36.0" width="1.6" height="1.3" opacity="0.63"/><rect x="38.7" y="35.8" width="2.0" height="0.9" opacity="0.74"/><rect x="41.0" y="36.3" width="1.6" height="1.6" opacity="0.54"/><rect x="43.4" y="36.1" width="1.2" height="1.1" opacity="0.54"/><rect x="45.4" y="35.9" width="1.2" height="1.3" opacity="0.69"/><rect x="9.6" y="40.9" width="4.0" height="1.1" opacity="0.49"/><rect x="13.9" y="41.2" width="4.0" height="1.1" opacity="0.49"/><rect x="18.7" y="41.0" width="3.2" height="0.9" opacity="0.43"/><rect x="24.3" y="41.4" width="1.6" height="1.1" opacity="0.52"/><rect x="28.3" y="40.9" width="1.2" height="1.3" opacity="0.61"/><rect x="29.8" y="40.8" width="2.6" height="1.3" opacity="0.47"/><rect x="33.4" y="41.4" width="2.6" height="1.3" opacity="0.62"/><rect x="36.5" y="41.2" width="1.2" height="1.3" opacity="0.62"/><rect x="38.5" y="41.0" width="4.0" height="1.3" opacity="0.56"/><rect x="44.1" y="41.0" width="1.9" height="1.6" opacity="0.50"/><rect x="8.6" y="46.3" width="2.0" height="1.6" opacity="0.46"/><rect x="12.2" y="46.7" width="1.2" height="1.6" opacity="0.73"/><rect x="13.7" y="46.4" width="2.6" height="1.1" opacity="0.46"/><rect x="17.3" y="46.7" width="4.0" height="1.3" opacity="0.61"/><rect x="23.7" y="46.2" width="4.0" height="1.3" opacity="0.49"/><rect x="28.0" y="46.7" width="0.8" height="1.1" opacity="0.72"/><rect x="31.2" y="46.1" width="2.6" height="0.9" opacity="0.59"/><rect x="34.1" y="46.4" width="2.6" height="1.1" opacity="0.65"/><rect x="37.5" y="46.2" width="2.0" height="0.9" opacity="0.55"/><rect x="39.8" y="46.0" width="4.0" height="1.6" opacity="0.69"/><rect x="45.4" y="46.7" width="1.2" height="0.9" opacity="0.61"/><rect x="9.6" y="49.6" width="1.2" height="1.3" opacity="0.65"/><rect x="11.3" y="49.7" width="4.0" height="1.6" opacity="0.57"/><rect x="15.6" y="49.4" width="0.8" height="1.1" opacity="0.48"/><rect x="17.2" y="49.7" width="2.0" height="1.6" opacity="0.49"/><rect x="19.5" y="49.0" width="4.0" height="1.1" opacity="0.42"/><rect x="23.8" y="49.4" width="2.0" height="0.9" opacity="0.54"/><rect x="26.1" y="49.5" width="1.2" height="0.9" opacity="0.50"/><rect x="28.1" y="49.8" width="2.6" height="1.3" opacity="0.48"/><rect x="31.5" y="49.6" width="2.0" height="1.1" opacity="0.55"/><rect x="33.8" y="49.4" width="2.0" height="1.1" opacity="0.42"/><rect x="36.1" y="49.0" width="3.2" height="1.6" opacity="0.58"/><rect x="40.9" y="49.6" width="2.0" height="1.3" opacity="0.57"/><rect x="43.2" y="49.2" width="1.6" height="1.6" opacity="0.53"/><rect x="45.8" y="49.2" width="2.6" height="0.9" opacity="0.62"/><rect x="8.0" y="54.2" width="1.2" height="1.3" opacity="0.45"/><rect x="9.5" y="53.6" width="4.0" height="0.9" opacity="0.47"/><rect x="14.3" y="54.1" width="4.0" height="1.6" opacity="0.52"/><rect x="20.7" y="54.1" width="2.6" height="0.9" opacity="0.55"/><rect x="24.9" y="53.5" width="2.0" height="1.1" opacity="0.55"/><rect x="27.4" y="53.8" width="0.8" height="0.9" opacity="0.52"/><rect x="29.8" y="53.6" width="1.7" height="1.3" opacity="0.56"/><rect x="11.5" y="57.6" width="4.0" height="1.6" opacity="0.56"/><rect x="15.8" y="57.4" width="2.6" height="0.9" opacity="0.37"/><rect x="19.2" y="57.4" width="2.6" height="1.1" opacity="0.39"/><rect x="23.4" y="56.9" width="2.6" height="1.3" opacity="0.57"/><rect x="26.3" y="57.2" width="0.8" height="1.1" opacity="0.52"/><rect x="27.6" y="57.1" width="3.2" height="1.3" opacity="0.45"/><rect x="31.8" y="57.1" width="1.6" height="1.6" opacity="0.59"/><rect x="35.0" y="57.3" width="1.2" height="1.1" opacity="0.46"/><rect x="37.2" y="57.1" width="2.6" height="1.6" opacity="0.40"/><rect x="42.2" y="57.2" width="1.2" height="0.9" opacity="0.48"/></g></svg>
<div class="r" style="left:364px;top:380.8px;width:6.400000000000011px;height:9.199999999999966px;background:#FAFBFF;"></div>
<div class="r" style="left:370.3px;top:380.8px;width:9.199999999999966px;height:9.199999999999966px;background:#DCE5FD;"></div>
<div class="r" style="left:379.4px;top:380.8px;width:9.1px;height:9.199999999999966px;background:#C6D5FC;"></div>
<div class="r" style="left:388.4px;top:380.8px;width:9.300000000000045px;height:9.199999999999966px;background:#CEDBFD;"></div>
<div class="r" style="left:397.6px;top:380.8px;width:8.899999999999954px;height:9.199999999999966px;background:#DEE6FD;"></div>
<div class="r" style="left:406.4px;top:380.8px;width:9.200000000000022px;height:9.199999999999966px;background:#E0E8FE;"></div>
<div class="r" style="left:415.5px;top:380.8px;width:9.299999999999988px;height:9.199999999999966px;background:#E6EDFE;"></div>
<div class="r" style="left:424.7px;top:380.8px;width:9.200000000000022px;height:9.199999999999966px;background:#FDFDFF;"></div>
<div class="r" style="left:364px;top:389.9px;width:6.400000000000011px;height:9.1px;background:#F5F7FF;"></div>
<div class="r" style="left:370.3px;top:389.9px;width:9.199999999999966px;height:9.1px;background:#90ADFA;"></div>
<div class="r" style="left:379.4px;top:389.9px;width:9.1px;height:9.1px;background:#6A92F9;"></div>
<div class="r" style="left:388.4px;top:389.9px;width:9.300000000000045px;height:9.1px;background:#80A2FA;"></div>
<div class="r" style="left:397.6px;top:389.9px;width:8.899999999999954px;height:9.1px;background:#B8CAFC;"></div>
<div class="r" style="left:406.4px;top:389.9px;width:9.200000000000022px;height:9.1px;background:#A8BEFB;"></div>
<div class="r" style="left:415.5px;top:389.9px;width:9.299999999999988px;height:9.1px;background:#B4C7FC;"></div>
<div class="r" style="left:424.7px;top:389.9px;width:9.200000000000022px;height:9.1px;background:#EEF3FF;"></div>
<div class="r" style="left:370.3px;top:408.3px;width:29.8px;height:15.8px;background:#E6EBF4;border-radius:3px;"></div>
<div class="t" style="left:374.1px;top:410.50px;font-size:10.6px;line-height:10.6px;font-weight:700;color:#2F3542;letter-spacing:-0.598px;">Draft</div>
<div class="t n" style="left:535.8px;top:398.90px;font-size:12px;line-height:12px;font-weight:400;color:#363D4B;">-</div>
<div class="t n" style="left:631.8px;top:398.90px;font-size:12px;line-height:12px;font-weight:400;color:#363D4B;">-</div>
<div class="t n" style="left:675.3px;top:391.15px;font-size:12.7px;line-height:12.7px;font-weight:400;color:#363D4B;letter-spacing:0.103px;">2022/10/07</div>
<div class="t n" style="left:675.3px;top:407.15px;font-size:12.7px;line-height:12.7px;font-weight:400;color:#363D4B;letter-spacing:-0.02px;">10:38</div>
<div class="t n" style="left:771.1px;top:390.90px;font-size:11.6px;line-height:11.6px;font-weight:400;color:#363D4B;">Split</div>
<div class="t n" style="left:771.1px;top:407.00px;font-size:11.6px;line-height:11.6px;font-weight:400;color:#363D4B;">Test</div>
<div class="r" style="left:823.2px;top:389.3px;width:177.6px;height:30.6px;background:#fff;border:1px solid #D3D8E4;border-radius:3px;"></div>
<div class="r" style="left:979.6px;top:390.3px;width:1.2px;height:28.6px;background:#D3D8E4;"></div>
<svg style="left:985.9px;top:402.7px" width="9" height="6" viewBox="985.9 402.7 9 6"><path d="M986.9 403.7 L992.9 403.7 L989.9 406.9 Z" fill="#262C38"/></svg>
<svg style="left:830px;top:397.3px" width="16" height="14" viewBox="0 0 16 14"><path d="M3.6 7.9 H11.6 M8.1 4.3 L11.6 7.9 L8.1 11.5" fill="none" stroke="#262C38" stroke-width="1.3"/></svg>
<div class="t" style="left:849.2px;top:399.05px;font-size:11.5px;line-height:11.5px;font-weight:700;color:#272D3A;letter-spacing:-0.388px;">Continue</div>
<div class="r" style="left:231px;top:452.3px;width:780px;height:1.4px;background:#DCE0EA;"></div>
<div class="r" style="left:241.2px;top:497.2px;width:10.2px;height:10.4px;background:#fff;border:1px solid #CDD3DF;border-radius:3px;"></div>
<div class="r" style="left:269.4px;top:471.1px;width:84.2px;height:60px;background:#fff;border:1px solid #CDD3E0;border-radius:3px;"></div>
<svg style="left:269.4px;top:471.1px" width="84" height="60" viewBox="0 0 84 60"><g fill="#2a2a2a"><rect x="8.6" y="7.5" width="1.2" height="1.1" opacity="0.62"/><rect x="11.4" y="7.7" width="3.2" height="0.9" opacity="0.69"/><rect x="16.2" y="7.6" width="2.0" height="1.1" opacity="0.56"/><rect x="19.0" y="7.7" width="2.6" height="1.6" opacity="0.63"/><rect x="23.2" y="7.4" width="1.2" height="1.1" opacity="0.78"/><rect x="26.8" y="7.8" width="0.8" height="0.9" opacity="0.55"/><rect x="8.6" y="12.0" width="0.8" height="0.9" opacity="0.49"/><rect x="10.2" y="12.5" width="2.6" height="1.6" opacity="0.46"/><rect x="15.2" y="11.9" width="2.0" height="1.6" opacity="0.52"/><rect x="8.6" y="15.0" width="1.6" height="0.9" opacity="0.44"/><rect x="10.5" y="15.5" width="3.2" height="1.3" opacity="0.52"/><rect x="14.7" y="15.5" width="2.6" height="1.6" opacity="0.56"/><rect x="18.1" y="15.3" width="3.2" height="1.3" opacity="0.67"/><rect x="21.6" y="15.5" width="1.2" height="1.3" opacity="0.67"/><rect x="25.2" y="15.6" width="0.4" height="1.1" opacity="0.58"/><rect x="8.6" y="26.4" width="1.6" height="0.9" opacity="0.42"/><rect x="11.0" y="26.0" width="2.0" height="1.3" opacity="0.62"/><rect x="13.3" y="26.0" width="1.2" height="1.3" opacity="0.52"/><rect x="14.8" y="26.2" width="0.8" height="0.9" opacity="0.51"/><rect x="15.9" y="25.9" width="2.6" height="1.1" opacity="0.67"/><rect x="19.3" y="26.5" width="0.8" height="0.9" opacity="0.66"/><rect x="20.4" y="25.7" width="0.5" height="1.3" opacity="0.45"/><rect x="8.6" y="35.9" width="4.0" height="1.3" opacity="0.56"/><rect x="13.4" y="36.2" width="4.0" height="1.6" opacity="0.59"/><rect x="18.4" y="36.6" width="3.2" height="0.9" opacity="0.64"/><rect x="23.2" y="36.4" width="2.6" height="1.6" opacity="0.64"/><rect x="26.6" y="36.2" width="1.6" height="1.3" opacity="0.61"/><rect x="29.2" y="36.3" width="0.8" height="1.3" opacity="0.46"/><rect x="31.0" y="36.1" width="3.2" height="0.9" opacity="0.64"/><rect x="34.7" y="36.0" width="1.6" height="1.3" opacity="0.63"/><rect x="38.7" y="35.8" width="2.0" height="0.9" opacity="0.74"/><rect x="41.0" y="36.3" width="1.6" height="1.6" opacity="0.54"/><rect x="43.4" y="36.1" width="1.2" height="1.1" opacity="0.54"/><rect x="45.4" y="35.9" width="1.2" height="1.3" opacity="0.69"/><rect x="9.6" y="40.9" width="4.0" height="1.1" opacity="0.49"/><rect x="13.9" y="41.2" width="4.0" height="1.1" opacity="0.49"/><rect x="18.7" y="41.0" width="3.2" height="0.9" opacity="0.43"/><rect x="24.3" y="41.4" width="1.6" height="1.1" opacity="0.52"/><rect x="28.3" y="40.9" width="1.2" height="1.3" opacity="0.61"/><rect x="29.8" y="40.8" width="2.6" height="1.3" opacity="0.47"/><rect x="33.4" y="41.4" width="2.6" height="1.3" opacity="0.62"/><rect x="36.5" y="41.2" width="1.2" height="1.3" opacity="0.62"/><rect x="38.5" y="41.0" width="4.0" height="1.3" opacity="0.56"/><rect x="44.1" y="41.0" width="1.9" height="1.6" opacity="0.50"/><rect x="8.6" y="46.3" width="2.0" height="1.6" opacity="0.46"/><rect x="12.2" y="46.7" width="1.2" height="1.6" opacity="0.73"/><rect x="13.7" y="46.4" width="2.6" height="1.1" opacity="0.46"/><rect x="17.3" y="46.7" width="4.0" height="1.3" opacity="0.61"/><rect x="23.7" y="46.2" width="4.0" height="1.3" opacity="0.49"/><rect x="28.0" y="46.7" width="0.8" height="1.1" opacity="0.72"/><rect x="31.2" y="46.1" width="2.6" height="0.9" opacity="0.59"/><rect x="34.1" y="46.4" width="2.6" height="1.1" opacity="0.65"/><rect x="37.5" y="46.2" width="2.0" height="0.9" opacity="0.55"/><rect x="39.8" y="46.0" width="4.0" height="1.6" opacity="0.69"/><rect x="45.4" y="46.7" width="1.2" height="0.9" opacity="0.61"/><rect x="9.6" y="49.6" width="1.2" height="1.3" opacity="0.65"/><rect x="11.3" y="49.7" width="4.0" height="1.6" opacity="0.57"/><rect x="15.6" y="49.4" width="0.8" height="1.1" opacity="0.48"/><rect x="17.2" y="49.7" width="2.0" height="1.6" opacity="0.49"/><rect x="19.5" y="49.0" width="4.0" height="1.1" opacity="0.42"/><rect x="23.8" y="49.4" width="2.0" height="0.9" opacity="0.54"/><rect x="26.1" y="49.5" width="1.2" height="0.9" opacity="0.50"/><rect x="28.1" y="49.8" width="2.6" height="1.3" opacity="0.48"/><rect x="31.5" y="49.6" width="2.0" height="1.1" opacity="0.55"/><rect x="33.8" y="49.4" width="2.0" height="1.1" opacity="0.42"/><rect x="36.1" y="49.0" width="3.2" height="1.6" opacity="0.58"/><rect x="40.9" y="49.6" width="2.0" height="1.3" opacity="0.57"/><rect x="43.2" y="49.2" width="1.6" height="1.6" opacity="0.53"/><rect x="45.8" y="49.2" width="2.6" height="0.9" opacity="0.62"/><rect x="8.0" y="54.2" width="1.2" height="1.3" opacity="0.45"/><rect x="9.5" y="53.6" width="4.0" height="0.9" opacity="0.47"/><rect x="14.3" y="54.1" width="4.0" height="1.6" opacity="0.52"/><rect x="20.7" y="54.1" width="2.6" height="0.9" opacity="0.55"/><rect x="24.9" y="53.5" width="2.0" height="1.1" opacity="0.55"/><rect x="27.4" y="53.8" width="0.8" height="0.9" opacity="0.52"/><rect x="29.8" y="53.6" width="1.7" height="1.3" opacity="0.56"/><rect x="11.5" y="57.6" width="4.0" height="1.6" opacity="0.56"/><rect x="15.8" y="57.4" width="2.6" height="0.9" opacity="0.37"/><rect x="19.2" y="57.4" width="2.6" height="1.1" opacity="0.39"/><rect x="23.4" y="56.9" width="2.6" height="1.3" opacity="0.57"/><rect x="26.3" y="57.2" width="0.8" height="1.1" opacity="0.52"/><rect x="27.6" y="57.1" width="3.2" height="1.3" opacity="0.45"/><rect x="31.8" y="57.1" width="1.6" height="1.6" opacity="0.59"/><rect x="35.0" y="57.3" width="1.2" height="1.1" opacity="0.46"/><rect x="37.2" y="57.1" width="2.6" height="1.6" opacity="0.40"/><rect x="42.2" y="57.2" width="1.2" height="0.9" opacity="0.48"/></g></svg>
<svg style="left:370.6px;top:484.3px" width="34" height="13" viewBox="370.6 193 34 13"><g fill="none" stroke="#0B4BEF" stroke-width="1.95" stroke-linecap="butt">
<path d="M373.4 194.5 H380"/><path d="M371.3 198.2 H381.2"/><path d="M376.3 198.2 C376.3 201 375 202.6 372.6 203.5"/>
<path d="M383 195.4 H389.8 C388.8 198.8 386.6 201.6 382.6 203.5"/><path d="M386.6 199.6 L391.4 203.6"/>
<path d="M396.6 193.3 V204.2"/><path d="M397 197.6 C398.8 198.2 400.8 199.2 402.6 200.6"/>
</g></svg>
<div class="r" style="left:370.3px;top:505.1px;width:27.2px;height:15.8px;background:#E6EBF4;border-radius:3px;"></div>
<div class="t" style="left:374.1px;top:507.30px;font-size:10.6px;line-height:10.6px;font-weight:700;color:#2F3542;letter-spacing:-0.476px;">Sent</div>
<div class="t n" style="left:535.8px;top:488.15px;font-size:12.7px;line-height:12.7px;font-weight:400;color:#363D4B;letter-spacing:0.103px;">2022/08/14</div>
<div class="t n" style="left:535.8px;top:504.15px;font-size:12.7px;line-height:12.7px;font-weight:400;color:#363D4B;letter-spacing:-0.02px;">17:03</div>
<div class="t n" style="left:631.4px;top:495.55px;font-size:12.7px;line-height:12.7px;font-weight:400;color:#363D4B;">3</div>
<div class="t n" style="left:675.3px;top:488.15px;font-size:12.7px;line-height:12.7px;font-weight:400;color:#363D4B;letter-spacing:0.103px;">2022/08/14</div>
<div class="t n" style="left:675.3px;top:504.15px;font-size:12.7px;line-height:12.7px;font-weight:400;color:#363D4B;letter-spacing:-0.02px;">16:35</div>
<div class="t n" style="left:771.1px;top:487.90px;font-size:11.6px;line-height:11.6px;font-weight:400;color:#363D4B;">One-</div>
<div class="t n" style="left:771.1px;top:504.00px;font-size:11.6px;line-height:11.6px;font-weight:400;color:#363D4B;">Time</div>
<div class="r" style="left:823.2px;top:486.3px;width:177.6px;height:30.6px;background:#fff;border:1px solid #D3D8E4;border-radius:3px;"></div>
<div class="r" style="left:979.6px;top:487.3px;width:1.2px;height:28.6px;background:#D3D8E4;"></div>
<svg style="left:985.9px;top:499.7px" width="9" height="6" viewBox="985.9 499.7 9 6"><path d="M986.9 500.7 L992.9 500.7 L989.9 503.9 Z" fill="#262C38"/></svg>
<svg style="left:830px;top:494.3px" width="16" height="14" viewBox="0 0 16 14"><rect x="3.6" y="8" width="2" height="3.6" fill="#262C38"/><rect x="7" y="4.3" width="2" height="7.3" fill="#262C38"/><rect x="10.4" y="6.2" width="2" height="5.4" fill="#262C38"/></svg>
<div class="t" style="left:849.2px;top:496.05px;font-size:11.5px;line-height:11.5px;font-weight:700;color:#272D3A;letter-spacing:-0.255px;">View Report</div>
<div class="r" style="left:231px;top:549.4px;width:780px;height:51px;background:#F0F4FD;border-radius:4px;"></div>
<div class="r" style="left:515.5px;top:561.4px;width:24px;height:27.4px;background:;border:1px solid #D3D8E4;border-radius:3px;background:#fff;"></div>
<div class="r" style="left:550.4px;top:561.4px;width:47px;height:27.4px;background:;border:1px solid #D3D8E4;border-radius:3px;background:#fff;"></div>
<div class="r" style="left:607.5px;top:561.4px;width:24px;height:27.4px;background:;border:1px solid #D3D8E4;border-radius:3px;background:#fff;"></div>
<svg style="left:515px;top:561px" width="120" height="28" viewBox="515 561 120 28"><path d="M530.6 571.2 L526.2 575.4 L530.6 579.6" fill="none" stroke="#1F2430" stroke-width="1.6"/><path d="M617 571.2 L621.4 575.4 L617 579.6" fill="none" stroke="#1F2430" stroke-width="1.6"/></svg>
<div class="r" style="left:557px;top:587.2px;width:33px;height:2px;background:#1D56F2;"></div>
<div class="t" style="left:570.2px;top:569.20px;font-size:12px;line-height:12px;font-weight:700;color:#1D56F2;">1</div>
<div class="t" style="left:906.4px;top:569.20px;font-size:12px;line-height:12px;font-weight:700;color:#2F3542;letter-spacing:-1.021px;">Rows</div>
<div class="r" style="left:941.4px;top:559.5px;width:59.2px;height:31px;background:;border:1px solid #D3D8E4;border-radius:3px;background:#fff;"></div>
<div class="t n" style="left:952.1px;top:569.15px;font-size:12.5px;line-height:12.5px;font-weight:400;color:#2F3542;letter-spacing:0.071px;">10</div>
<svg style="left:983.1px;top:572.2px" width="9" height="6" viewBox="983.1 572.2 9 6"><path d="M984.1 573.2 L990.1 573.2 L987.1 576.4000000000001 Z" fill="#2D3340"/></svg>
<div class="t n" style="left:865.6px;top:602.40px;font-size:17px;line-height:17px;font-weight:400;color:#A6A6A6;letter-spacing:0.018px;-webkit-text-stroke:0;">ONLINE KIGYO LAB</div>
</body></html>
